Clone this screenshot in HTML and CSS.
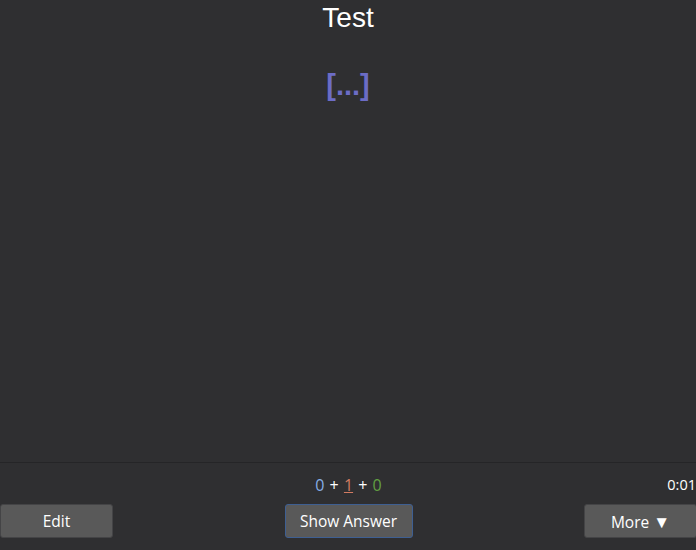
FILE: index.html
```html
<!DOCTYPE html>
<html>
<head>
<meta charset="utf-8">
<link rel="stylesheet" href="styles.css">
</head>
<body>
<div class="page">
  <main class="card">
    <div class="front">Test</div>
    <div class="cloze">[...]</div>
  </main>
  <footer class="bar">
    <div class="col left">
      <div class="stat"></div>
      <button class="btn edit">Edit</button>
    </div>
    <div class="col center">
      <div class="stat counts"><span class="new">0</span> + <span class="learn">1</span> + <span class="review">0</span></div>
      <button class="btn answer">Show Answer</button>
    </div>
    <div class="col right">
      <div class="stat timer">0:01</div>
      <button class="btn more">More <span class="tri">&#9660;</span></button>
    </div>
  </footer>
</div>
</body>
</html>
```
FILE: styles.css
```css
html, body {
  margin: 0;
  padding: 0;
  background: #2f2f31;
  overflow: hidden;
}
.page {
  width: 696px;
  height: 550px;
  display: flex;
  flex-direction: column;
}
.card {
  flex: 1;
  text-align: center;
  font-family: "Liberation Sans", Arial, sans-serif;
  color: #ffffff;
  padding-top: 2px;
}
.front {
  font-size: 28px;
  line-height: 32px;
}
.cloze {
  margin-top: 34px;
  font-size: 29px;
  font-weight: bold;
  line-height: 34px;
  color: #6c6cc6;
}
.bar {
  height: 87px;
  border-top: 1px solid #252527;
  display: grid;
  grid-template-columns: 113px 1fr 116px;
  width: 700px;
  font-family: "Open Sans", "Noto Sans", sans-serif;
}
.col {
  display: flex;
  flex-direction: column;
  align-items: center;
}
.stat {
  height: 41px;
  box-sizing: border-box;
  padding-top: 12px;
  font-size: 16px;
  line-height: 20px;
  color: #ffffff;
}
.counts {
  word-spacing: 1px;
}
.timer {
  align-self: flex-end;
  padding-right: 4px;
  font-size: 14.5px;
}
.counts .new { color: #86aee6; }
.counts .learn { color: #d27b62; text-decoration: underline; }
.counts .review { color: #62a042; }
.btn {
  height: 34px;
  box-sizing: border-box;
  border: 1px solid #444446;
  border-radius: 3px;
  background: #595959;
  color: #ffffff;
  font-family: "Open Sans", "Noto Sans", sans-serif;
  font-size: 15.5px;
  padding: 0;
}
.tri { font-size: 17px; }
.edit { width: 113px; align-self: flex-start; }
.answer { width: 128px; border-color: #3e5f92; }
.more { width: 113px; align-self: flex-start; }
```
